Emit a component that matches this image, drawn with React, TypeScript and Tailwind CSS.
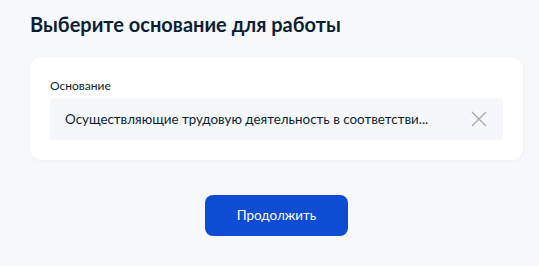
export default function App() {
  return (
    <div
      className="min-h-[266px] w-[539px] bg-[#f6f8fb] pl-[30px] pr-[16px] pt-[10px]"
      style={{ fontFamily: "Lato, 'Noto Sans', sans-serif" }}
    >
      <h1 className="text-[20px] font-bold leading-[28px] text-[#0b1f33]">
        Выберите основание для работы
      </h1>

      <div className="mt-[19px] rounded-[12px] bg-white px-[20px] pb-[20px] pt-[20px] shadow-[0_1px_4px_rgba(11,31,51,0.04)]">
        <label className="block text-[12px] leading-[18px] text-[#0b1f33]">
          Основание
        </label>
        <div className="mt-[3px] flex h-[42px] items-center justify-between rounded-[4px] bg-[#f5f7fa] pl-[15px] pr-[15px]">
          <span className="truncate text-[13.4px] text-[#0b1f33]">
            Осуществляющие трудовую деятельность в соответстви...
          </span>
          <svg width="16" height="16" viewBox="0 0 16 16" className="mr-[1px] shrink-0">
            <path d="M1 1 L15 15 M15 1 L1 15" stroke="#a3abb5" strokeWidth="1.3" fill="none" />
          </svg>
        </div>
      </div>

      <div className="mt-[35px] flex justify-center">
        <button
          type="button"
          className="h-[41px] w-[143px] rounded-[8px] bg-[#0d4cd3] text-[13.4px] text-white"
        >
          Продолжить
        </button>
      </div>
    </div>
  );
}
